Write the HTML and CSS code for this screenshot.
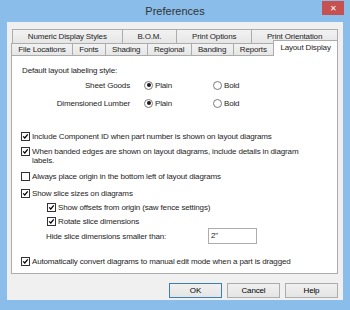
FILE: index.html
```html
<!DOCTYPE html>
<html lang="en">
<head>
    <meta charset="UTF-8">
    <title>Preferences</title>
    <link rel="stylesheet" href="styles.css">
</head>
<body>

<div class="window">
    <div class="titlebar">
        <span class="title">Preferences</span>
        <span class="close">&#x2715;</span>
    </div>

    <div class="client">
        <div class="tab-row back">
            <div class="tab">Numeric Display Styles</div>
            <div class="tab">B.O.M.</div>
            <div class="tab">Print Options</div>
            <div class="tab">Print Orientation</div>
        </div>
        <div class="tab-row front">
            <div class="tab">File Locations</div>
            <div class="tab">Fonts</div>
            <div class="tab">Shading</div>
            <div class="tab">Regional</div>
            <div class="tab">Banding</div>
            <div class="tab">Reports</div>
            <div class="tab active">Layout Display</div>
        </div>

        <div class="panel">
            <div class="heading">Default layout labeling style:</div>

            <div class="radio-row first">
                <span class="radio-label">Sheet Goods</span>
                <span class="option"><span class="rb checked"></span>Plain</span>
                <span class="option"><span class="rb"></span>Bold</span>
            </div>
            <div class="radio-row second">
                <span class="radio-label">Dimensioned Lumber</span>
                <span class="option"><span class="rb checked"></span>Plain</span>
                <span class="option"><span class="rb"></span>Bold</span>
            </div>

            <div class="check c1">
                <span class="cb"><svg viewBox="0 0 9 9"><path d="M1.5 4.3 L3.6 6.4 L7.4 1.8"/></svg></span>
                <span>Include Component ID when part number is shown on layout diagrams</span>
            </div>
            <div class="check c2">
                <span class="cb"><svg viewBox="0 0 9 9"><path d="M1.5 4.3 L3.6 6.4 L7.4 1.8"/></svg></span>
                <span class="wrap">When banded edges are shown on layout diagrams, include details in diagram labels.</span>
            </div>
            <div class="check c3">
                <span class="cb"></span>
                <span>Always place origin in the bottom left of layout diagrams</span>
            </div>
            <div class="check c3">
                <span class="cb"><svg viewBox="0 0 9 9"><path d="M1.5 4.3 L3.6 6.4 L7.4 1.8"/></svg></span>
                <span>Show slice sizes on diagrams</span>
            </div>
            <div class="check sub">
                <span class="cb"><svg viewBox="0 0 9 9"><path d="M1.5 4.3 L3.6 6.4 L7.4 1.8"/></svg></span>
                <span>Show offsets from origin (saw fence settings)</span>
            </div>
            <div class="check sub">
                <span class="cb"><svg viewBox="0 0 9 9"><path d="M1.5 4.3 L3.6 6.4 L7.4 1.8"/></svg></span>
                <span>Rotate slice dimensions</span>
            </div>
            <div class="hide-row">
                <span class="hide-label">Hide slice dimensions smaller than:</span>
                <span class="textbox">2"</span>
            </div>
            <div class="check last">
                <span class="cb"><svg viewBox="0 0 9 9"><path d="M1.5 4.3 L3.6 6.4 L7.4 1.8"/></svg></span>
                <span>Automatically convert diagrams to manual edit mode when a part is dragged</span>
            </div>
        </div>

        <div class="buttons">
            <button class="default">OK</button>
            <button>Cancel</button>
            <button>Help</button>
        </div>
    </div>
</div>

</body>
</html>
```

FILE: styles.css
```css
body {
    margin: 0;
    padding: 0;
    font-family: "Liberation Sans", Arial, sans-serif;
    font-size: 8px;
    letter-spacing: -0.15px;
    color: #1e1e1e;
}
.window {
    position: relative;
    width: 350px;
    height: 310px;
    box-sizing: border-box;
    padding: 0 7px 10px 7px;
    background-color: #8abdea;
    display: flex;
    flex-direction: column;
}
.titlebar {
    height: 22px;
    display: flex;
    align-items: center;
    justify-content: center;
}
.title {
    font-size: 11px;
    letter-spacing: 0;
    color: #333;
}
.close {
    position: absolute;
    top: 1px;
    right: 6px;
    width: 22px;
    height: 14px;
    background-color: #c75050;
    color: #fff;
    font-size: 8px;
    display: flex;
    align-items: center;
    justify-content: center;
}
.client {
    flex: 1;
    background-color: #f0f0f0;
    padding: 7px 5px 0 4px;
    display: flex;
    flex-direction: column;
}
.tab-row {
    display: flex;
}
.tab-row.back {
    height: 14px;
    padding: 0 1px;
}
.tab-row.front {
    height: 12px;
    position: relative;
    z-index: 1;
}
.tab {
    flex: 1 1 auto;
    box-sizing: border-box;
    border: 1px solid #acacac;
    border-bottom: none;
    margin-right: -1px;
    background: linear-gradient(#f2f2f2, #e6e6e6);
    text-align: center;
    white-space: nowrap;
    padding: 0 4px;
    line-height: 12px;
}
.tab-row.back .tab {
    line-height: 13px;
}
.tab.active {
    background: #fff;
    margin-top: -3px;
    height: 16px;
    line-height: 13px;
    margin-right: 0;
}
.panel {
    height: 219px;
    box-sizing: border-box;
    background-color: #fff;
    border: 1px solid #acacac;
    padding: 0 0 0 9px;
    display: flex;
    flex-direction: column;
}
.heading {
    margin-top: 10px;
    padding-left: 1px;
    line-height: 10px;
}
.radio-row {
    display: flex;
    align-items: center;
    height: 10px;
}
.radio-row.first {
    margin-top: 4px;
}
.radio-row.second {
    margin-top: 8px;
}
.radio-label {
    width: 109px;
    text-align: right;
    margin-right: 14px;
}
.option {
    width: 69px;
    display: flex;
    align-items: center;
    gap: 2px;
}
.rb {
    width: 9px;
    height: 9px;
    box-sizing: border-box;
    border: 1px solid #7a7a7a;
    border-radius: 50%;
    background: #fff;
    display: flex;
    align-items: center;
    justify-content: center;
}
.rb.checked::after {
    content: "";
    width: 4px;
    height: 4px;
    border-radius: 50%;
    background: #1a1a1a;
}
.check {
    display: flex;
    align-items: flex-start;
    gap: 2px;
    line-height: 10px;
}
.c1 {
    margin-top: 24px;
}
.c2 {
    margin-top: 5px;
    line-height: 9px;
}
.c3 {
    margin-top: 7px;
}
.sub {
    margin-top: 4px;
    margin-left: 26px;
}
.last {
    margin-top: 13px;
}
.wrap {
    width: 268px;
}
.cb {
    flex: none;
    width: 9px;
    height: 9px;
    box-sizing: border-box;
    border: 1px solid #333;
    background: #fff;
    display: flex;
}
.cb svg {
    width: 7px;
    height: 7px;
    fill: none;
    stroke: #000;
    stroke-width: 1.6;
}
.hide-row {
    display: flex;
    align-items: center;
    height: 16px;
    margin-top: 1px;
    margin-left: 25px;
}
.hide-label {
    width: 162px;
}
.textbox {
    width: 49px;
    height: 16px;
    box-sizing: border-box;
    border: 1px solid #abadb3;
    background: #fff;
    padding: 2px 0 0 2px;
    line-height: 10px;
}
.buttons {
    display: flex;
    justify-content: flex-end;
    gap: 5px;
    margin-top: 9px;
}
.buttons button {
    width: 53px;
    height: 15px;
    padding: 0;
    font-family: "Liberation Sans", Arial, sans-serif;
    font-size: 8px;
    letter-spacing: -0.15px;
    color: #000;
    border: 1px solid #acacac;
    background: linear-gradient(#f0f0f0, #e5e5e5);
}
.buttons button.default {
    border-color: #3c7fb1;
}
```
